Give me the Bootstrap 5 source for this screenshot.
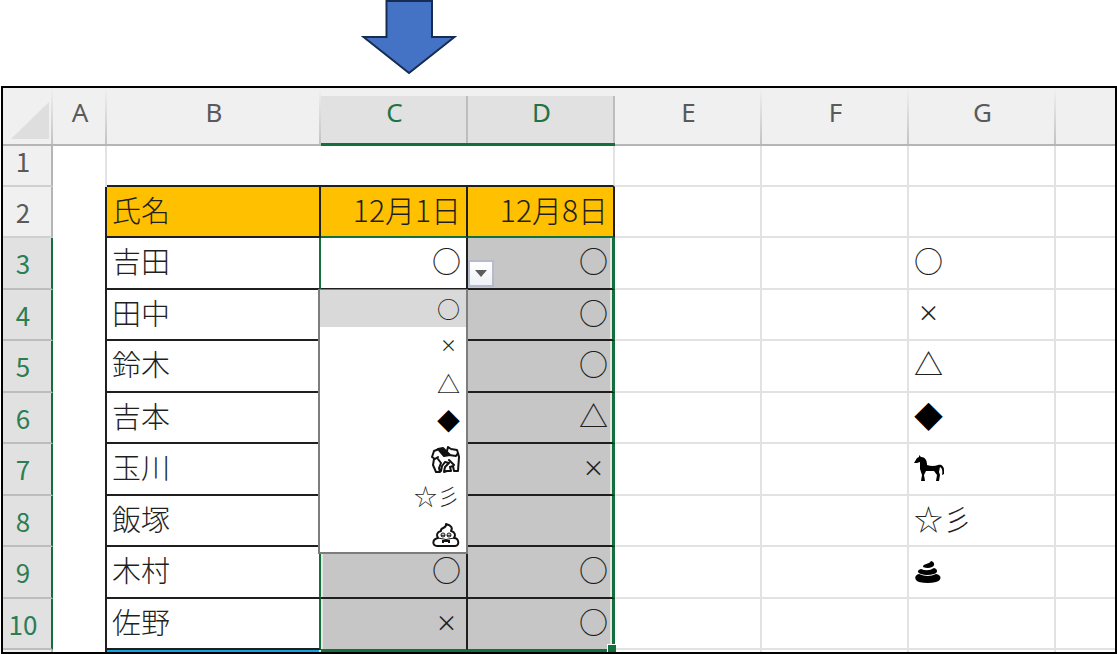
<!DOCTYPE html>
<html lang="ja">
<head>
<meta charset="utf-8">
<meta name="viewport" content="width=device-width, initial-scale=1">
<title>出欠表</title>
<link href="https://cdn.jsdelivr.net/npm/bootstrap@5.3.0/dist/css/bootstrap.min.css" rel="stylesheet">
<style>
  :root { --line: #e2e2e2; --ink: #1f1f1f; --green: #13703d; --head: #f0f0f0; --head-on: #e1e1e1; --sel: #c6c6c6; }
  body { background: #fff; font-family: "Noto Sans CJK JP", sans-serif; color: var(--ink); }
  .arrow-band { height: 86px; padding-left: 361px; }
  .sheet-frame { border: 2px solid #000; margin-left: 1px; }
  .sheet { table-layout: fixed; border-collapse: separate; border-spacing: 0; }
  .sheet th, .sheet td { height: 51px; padding: 0 5px 6px; border: 0 solid var(--line); border-right-width: 2px; border-bottom-width: 2px; font-size: 29px; line-height: 32px; font-weight: 300; white-space: nowrap; vertical-align: middle; }
  .sheet tbody tr:nth-child(odd) > * { height: 52px; }
  .sheet tbody tr.first > * { height: 41px; }
  .sheet tr > :last-child { border-right-width: 0; }
  .c-head { width: 50px; } .c-a { width: 54px; } .c-b { width: 214px; } .c-n { width: 147px; }

  .sheet thead th { height: 58px; padding: 0 0 8px; background: linear-gradient(#f0f0f000, #c3c3c3) right / 2px 100% no-repeat, var(--head); border-right-width: 0; border-bottom-color: #b5b5b5; font: 400 26px/28px "Noto Sans", sans-serif; color: #5a5a5a; text-align: center; }
  .sheet thead th.on { background: linear-gradient(#bdbdbd, #bdbdbd) right bottom / 2px 47px no-repeat, linear-gradient(var(--head) 8px, var(--head-on) 8px); border-bottom: 3px solid var(--green); color: #217346; }
  .sheet thead th:last-child { background: var(--head); }
  .sheet thead th.corner { padding: 8px 4px 0 0; text-align: right; }
  .corner svg { display: block; margin-left: auto; }
  .sheet tbody th { padding: 0 8px 0 0; background: var(--head); border-color: #d0d0d0; border-right-color: #b5b5b5; font-size: 26px; line-height: 28px; font-weight: 400; color: #5a5a5a; text-align: center; }
  .sheet tbody .first th { padding-bottom: 10px; }
  .sheet tbody .on th { background: var(--head-on); border-bottom-color: #bdbdbd; border-right-color: var(--green); color: #2c7d52; }

  .sheet td.blank { border-bottom-width: 0; }
  .sheet .first td.open { border-right-width: 0; }
  .sheet .first td.above { border-bottom-color: var(--ink); }
  .sheet td.edge { border-right-color: var(--ink); }
  .sheet td.name { border-color: var(--ink); }
  .sheet td.title { background: #ffc000; border-color: var(--ink); }
  .sheet td.date { border-bottom-color: var(--green); font-size: 30px; }
  .sheet .on td.name { border-right-color: var(--green); }
  .sheet td.pick { background: var(--sel); border-color: var(--ink); }
  .sheet td.pick, .sheet td.sign { font-weight: 400; }
  .sheet td.stars { font-weight: 300; }
  .sheet td.pick.c { box-shadow: inset 2px 0 #e6e6e6; }
  .sheet td.pick.d { border-right: 3px solid var(--green); box-shadow: inset -2px 0 #e6e6e6; padding-right: 4px; }
  .sheet td.pick.active { background: #fff; box-shadow: none; }
  .sheet .end td.pick { border-bottom: 1px solid var(--green); }
  .sheet tbody tr.stub > * { height: 2px; padding: 0; border-bottom: 0; font-size: 0; line-height: 0; }
  .stub .blue { background: #18a0e0; }
  .sheet .stub .green { background: var(--green); border-color: var(--green); }
  .cross { position: relative; bottom: 2px; display: inline-block; width: 29px; font-size: 22px; text-align: center; }

  .drop-btn { left: 100%; bottom: 1px; width: 26px; height: 27px; margin-left: 2px; border: 2px solid #b4bccb; background: linear-gradient(#fff, #eef1f6); z-index: 2; }
  .choices { left: -3px; right: -2px; top: 100%; height: 265px; margin-top: 1px; border: 2px solid #7d7d7d; border-top-width: 1px; background: #fff; z-index: 3; }
  .choices button { flex: 1 1 0; min-height: 0; border: 0; background: none; padding: 0 6px 2px; font-size: 23px; line-height: 26px; font-weight: 400; text-align: right; color: var(--ink); }
  .choices button.chosen { background: #d9d9d9; }
  .choices button.shooting { font-weight: 300; }
  .choices button svg { margin-top: 6px; }
  .choices .cross { width: 23px; font-size: 17px; }
  .sheet .solid, .choices button.solid { color: #000; }
  .handle { right: -4px; bottom: -3px; width: 9px; height: 8px; background: var(--green); border: solid #fff; border-width: 1px 0 0 1px; }
  .pict { display: block; }
  .sheet td.pict-cell { padding-bottom: 0; }
</style>
</head>
<body>
<div class="arrow-band">
  <svg class="d-block" width="96" height="76" viewBox="0 0 96 76" aria-hidden="true"><path d="M25.5 1H71v36h22.500L48 73 2.500 37h23z" fill="#4472c4" stroke="#172c51" stroke-width="2"/></svg>
</div>
<main class="sheet-frame">
<table class="sheet w-100">
  <colgroup><col class="c-head"><col class="c-a"><col class="c-b"><col class="c-n"><col class="c-n"><col class="c-n"><col class="c-n"><col class="c-n"><col></colgroup>
  <thead>
    <tr><th class="corner"><svg width="38" height="37" viewBox="0 0 38 37" aria-hidden="true"><path d="M38 0v37H0z" fill="#dedede"/></svg></th><th>A</th><th>B</th><th class="on">C</th><th class="on">D</th><th>E</th><th>F</th><th>G</th><th></th></tr>
  </thead>
  <tbody>
    <tr class="first"><th scope="row">1</th><td class="blank"></td><td class="open above"></td><td class="open above"></td><td class="above"></td><td></td><td></td><td></td><td></td></tr>
    <tr><th scope="row">2</th><td class="blank edge"></td><td class="title">氏名</td><td class="title date text-end">12月1日</td><td class="title date text-end">12月8日</td><td></td><td></td><td></td><td></td></tr>
    <tr class="on"><th scope="row">3</th><td class="blank edge"></td><td class="name">吉田</td>
      <td class="pick c active text-end position-relative">○
        <button type="button" class="drop-btn position-absolute d-flex align-items-center justify-content-center p-0" aria-label="リストを開く"><svg width="12" height="7" viewBox="0 0 12 7" aria-hidden="true"><path d="M0 0h12L6 7z" fill="#5c5c5c"/></svg></button>
        <div class="choices position-absolute d-flex flex-column">
          <button type="button" class="chosen">○</button>
          <button type="button"><span class="cross">×</span></button>
          <button type="button">△</button>
          <button type="button" class="solid">◆</button>
          <button type="button" aria-label="馬"><svg class="pict ms-auto" width="29" height="28" viewBox="0 0 29 28" fill="none" stroke="#111" stroke-width="2" stroke-linejoin="round" stroke-linecap="round" aria-hidden="true"><path d="M8 3 3 5 1 11l3 2 3-2M3 13l-1 6 3 7h4l-1-4 2-5-3-4M9 3l9 6 7 1 2-3-1-3-6-1-3-2-1 4M27 7l1 4-1 14h-4l-1-5-3 1 1 4h-4l-3 1 1-5 4-4-4-1-3 4-1 5M18 14l5 5"/><path d="m7 3 5-1 7 7-6 1z" fill="#111"/></svg></button>
          <button type="button" class="shooting">☆彡</button>
          <button type="button" aria-label="うんち"><svg class="pict ms-auto" width="28" height="26" viewBox="0 0 28 26" fill="none" stroke="#111" stroke-width="2" stroke-linejoin="round" aria-hidden="true"><path d="M14 2c5 1 7 4 5 7 4 1 5 4 3 7 5 0 6 8 1 8H5c-5 0-5-7 1-8-2-3-1-6 3-7-1-4 6-2 5-7z"/><path d="M9 14q2-2 4 0M15 14q2-2 4 0M6 16q8 3 16 0" stroke-width="1"/><path d="M10 18h8v3h-2v-1h-4v1h-2z" fill="#111" stroke="none"/><circle cx="11" cy="13" r="2" stroke-width="1"/><circle cx="17" cy="13" r="2" stroke-width="1"/></svg></button>
        </div>
      </td>
      <td class="pick d text-end">○</td><td></td><td></td><td class="sign">○</td><td></td></tr>
    <tr class="on"><th scope="row">4</th><td class="blank edge"></td><td class="name">田中</td><td class="pick c"></td><td class="pick d text-end">○</td><td></td><td></td><td class="sign"><span class="cross">×</span></td><td></td></tr>
    <tr class="on"><th scope="row">5</th><td class="blank edge"></td><td class="name">鈴木</td><td class="pick c"></td><td class="pick d text-end">○</td><td></td><td></td><td class="sign">△</td><td></td></tr>
    <tr class="on"><th scope="row">6</th><td class="blank edge"></td><td class="name">吉本</td><td class="pick c"></td><td class="pick d text-end">△</td><td></td><td></td><td class="sign solid">◆</td><td></td></tr>
    <tr class="on"><th scope="row">7</th><td class="blank edge"></td><td class="name">玉川</td><td class="pick c"></td><td class="pick d text-end"><span class="cross">×</span></td><td></td><td></td><td class="pict-cell"><svg class="pict" width="30" height="28" viewBox="0 0 30 28" role="img" aria-label="馬"><path d="M0 8 3 3 5 2 5 0l2 2c4 0 6 3 6 8q6 2 11 0c3-1 6 1 6 5v4l-2 1c1-4 0-7-2-8l-1 5 1 3-1 6h-3l1-6-3-4-8 0-2 4 1 6H7l1-6-2-6 0-7-3 1z"/></svg></td><td></td></tr>
    <tr class="on"><th scope="row">8</th><td class="blank edge"></td><td class="name">飯塚</td><td class="pick c"></td><td class="pick d"></td><td></td><td></td><td class="stars">☆彡</td><td></td></tr>
    <tr class="on"><th scope="row">9</th><td class="blank edge"></td><td class="name">木村</td><td class="pick c text-end">○</td><td class="pick d text-end">○</td><td></td><td></td><td class="pict-cell"><svg class="pict" width="28" height="22" viewBox="0 0 28 22" role="img" aria-label="うんち"><path d="M9 6c0-4 6-2 8-6 4 1 4 5 1 6q-4 2-9 0zM7 8q7 3 13-1c4 1 4 5 0 6q-7 2-13 0c-4-1-4-4 0-5zM5 13q9 4 17 0c6 1 6 6 0 8q-8 2-17 0c-5-2-5-7 0-8z"/></svg></td><td></td></tr>
    <tr class="on end"><th scope="row">10</th><td class="blank edge"></td><td class="name">佐野</td><td class="pick c text-end"><span class="cross">×</span></td><td class="pick d text-end position-relative">○<span class="handle position-absolute"></span></td><td></td><td></td><td></td><td></td></tr>
    <tr class="stub"><th></th><td class="edge"></td><td class="blue"></td><td class="green"></td><td class="green"></td><td></td><td></td><td></td><td></td></tr>
  </tbody>
</table>
</main>
<script src="https://cdn.jsdelivr.net/npm/bootstrap@5.3.0/dist/js/bootstrap.bundle.min.js"></script>
</body>
</html>
